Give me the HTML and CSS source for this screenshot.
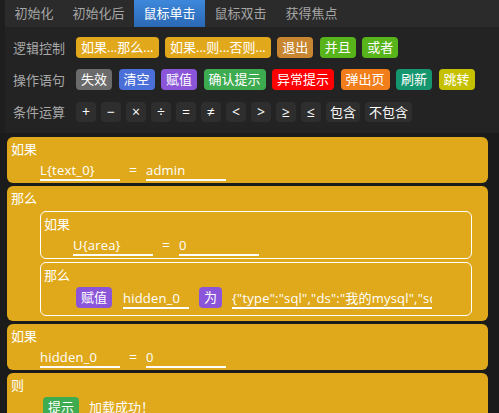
FILE: index.html
```html
<!DOCTYPE html>
<html lang="zh">
<head>
<meta charset="utf-8">
<title>事件编辑</title>
<link rel="stylesheet" href="styles.css">
</head>
<body>
<div class="top">
  <div class="tabs">
    <div class="tab">初始化</div>
    <div class="tab">初始化后</div>
    <div class="tab active">鼠标单击</div>
    <div class="tab">鼠标双击</div>
    <div class="tab">获得焦点</div>
  </div>
  <div class="toolbar">
    <div class="trow">
      <span class="tlabel">逻辑控制</span>
      <span class="btn c-yellow">如果...那么...</span>
      <span class="btn c-yellow">如果...则...否则...</span>
      <span class="btn c-brown">退出</span>
      <span class="btn c-lime">并且</span>
      <span class="btn c-lime">或者</span>
    </div>
    <div class="trow">
      <span class="tlabel">操作语句</span>
      <span class="btn c-grey">失效</span>
      <span class="btn c-blue">清空</span>
      <span class="btn c-purple">赋值</span>
      <span class="btn c-green">确认提示</span>
      <span class="btn c-red">异常提示</span>
      <span class="btn c-orange">弹出页</span>
      <span class="btn c-teal">刷新</span>
      <span class="btn c-olive">跳转</span>
    </div>
    <div class="trow ops">
      <span class="tlabel">条件运算</span>
      <span class="op">+</span>
      <span class="op">−</span>
      <span class="op">×</span>
      <span class="op">÷</span>
      <span class="op">=</span>
      <span class="op">≠</span>
      <span class="op">&lt;</span>
      <span class="op">&gt;</span>
      <span class="op">≥</span>
      <span class="op">≤</span>
      <span class="op opw">包含</span>
      <span class="op opw">不包含</span>
    </div>
  </div>
</div>
<div class="panel">
  <div class="block">
    <div class="btitle">如果</div>
    <div class="frow">
      <span class="field">L{text_0}</span><span class="eq">=</span><span class="field">admin</span>
    </div>
  </div>
  <div class="block">
    <div class="btitle">那么</div>
    <div class="inner">
      <div class="btitle">如果</div>
      <div class="frow">
        <span class="field">U{area}</span><span class="eq">=</span><span class="field">0</span>
      </div>
    </div>
    <div class="inner">
      <div class="btitle">那么</div>
      <div class="arow">
        <span class="btn c-purple">赋值</span>
        <span class="field f-var">hidden_0</span>
        <span class="btn c-purple">为</span>
        <span class="field f-json">{"type":"sql","ds":"我的mysql","sql":"select * from user"}</span>
      </div>
    </div>
  </div>
  <div class="block">
    <div class="btitle">如果</div>
    <div class="frow">
      <span class="field">hidden_0</span><span class="eq">=</span><span class="field">0</span>
    </div>
  </div>
  <div class="block">
    <div class="btitle">则</div>
    <div class="arow">
      <span class="btn c-green">提示</span>
      <span class="msg">加载成功！</span>
    </div>
  </div>
</div>
</body>
</html>
```

FILE: styles.css
```css
* { box-sizing: border-box; }
html, body { margin: 0; padding: 0; }
body {
  background: #1e1e1e;
  font-family: "Open Sans", "Noto Sans CJK SC", sans-serif;
  font-size: 13px;
  color: #fff;
  width: 499px;
  height: 413px;
  overflow: hidden;
}
.top { margin-left: 5px; background: #232323; }
.tabs { display: flex; height: 27px; background: #2b2b2b; }
.tab { padding: 0 9.5px; line-height: 27px; color: #a6a6a6; white-space: nowrap; }
.tab.active { background: linear-gradient(#3e88db, #2a68b4); color: #fff; }

.toolbar { padding: 10px 0 11px 8px; display: flex; flex-direction: column; gap: 11px; }
.trow { display: flex; align-items: center; height: 21px; gap: 6.5px; }
.trow.ops { gap: 5px; }
.tlabel { width: 56.5px; color: #a8a8a8; white-space: nowrap; flex-shrink: 0; }
.trow.ops .tlabel { width: 58px; }

.btn { display: inline-block; height: 21px; line-height: 21px; padding: 0 5px; border-radius: 4px; color: #fff; white-space: nowrap; flex-shrink: 0; }
.c-yellow { background: #e2a81b; }
.c-brown { background: #c7862f; }
.c-lime { background: #58b41b; }
.c-grey { background: #6b6b6b; }
.c-blue { background: #4b6fd9; }
.c-purple { background: #8a55d8; }
.c-green { background: #3dab50; }
.c-red { background: #ff0000; }
.c-orange { background: #f17d1b; }
.c-teal { background: #15966f; }
.c-olive { background: #c6c100; }

.op { width: 20px; height: 20px; line-height: 20px; text-align: center; background: #2e2e2e; border-radius: 4px; color: #fff; flex-shrink: 0; font-size: 14px; }
.op.opw { width: auto; padding: 0 4px; font-size: 13px; }

.panel {
  background: #1b1b1b;
  padding: 4px 11px 0 7px;
  display: flex;
  flex-direction: column;
  gap: 3px;
  height: 280px;
  overflow: hidden;
}
.block { background: #e0a91b; border-radius: 6px; padding: 2px 4px; flex-shrink: 0; }
.btitle { height: 20px; line-height: 20px; }
.frow { display: flex; height: 22px; margin-left: 29px; }
.field {
  display: block;
  width: 80px;
  height: 22px;
  padding-top: 3px;
  line-height: 17px;
  letter-spacing: 0.2px;
  border-bottom: 2px solid #fff;
  white-space: nowrap;
  overflow: hidden;
  flex-shrink: 0;
}
.eq { width: 26px; text-align: center; line-height: 22px; font-size: 14px; }
.inner { border: 1px solid #fff; border-radius: 6px; margin: 3px 12px 3px 29px; padding: 2px 3px; }
.arow { display: flex; align-items: center; height: 24px; gap: 10px; margin-left: 32px; }
.inner .arow { margin-bottom: 4px; }
.arow .f-var { width: 66px; height: 24px; padding-top: 5px; margin-left: 1px; }
.arow .f-json { width: 200px; height: 24px; padding-top: 5px; }
.msg { line-height: 24px; }
```
